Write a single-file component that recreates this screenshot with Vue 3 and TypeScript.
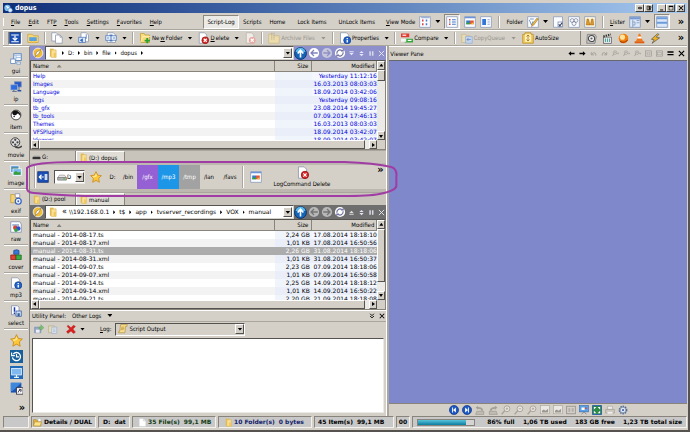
<script setup lang="ts">
import { h, ref } from 'vue'

const icons: Record<string, string> = {
  app: '<circle cx="6" cy="7" r="5.5" fill="#7cc0f4"/><path d="M3 3l5 2 3 5-4-1z" fill="#fff"/><circle cx="11" cy="11" r="4" fill="#dcecff" stroke="#2860b0"/>',
  dual: '<rect x="1" y="1" width="14" height="14" fill="#1c50b4" stroke="#0c2c78"/><path d="M3 4h10M8 5v5M5 8l3 3 3-3M3 13h10" stroke="#fff" stroke-width="1.6" fill="none"/>',
  dualSide: '<rect x="1" y="1" width="14" height="14" fill="#1c50b4" stroke="#0c2c78"/><path d="M3 8h6M6 5L3 8l3 3M11 4v8M13 4v8" stroke="#fff" stroke-width="1.5" fill="none"/>',
  tree: '<path d="M1 3h6l2 2h6v9H1z" fill="#f4d878" stroke="#c8a040"/><rect x="3" y="7" width="10" height="5" fill="#58a0e0"/><path d="M5 12h2v3H5zM9 12h2v3H9z" fill="#f0c040"/>',
  copy: '<path d="M1 1h6l3 3v8H1z" fill="#fff" stroke="#8a94a8"/><path d="M6 4h6l3 3v8H6z" fill="#fff" stroke="#8a94a8"/><path d="M12 4v3h3" fill="none" stroke="#8a94a8"/>',
  move: '<path d="M4 1h7l3 3v9H4z" fill="#fff" stroke="#8a94a8"/><rect x="1" y="7" width="9" height="7" fill="#dce8f8" stroke="#5078b8"/><path d="M3 11l3-2v4zM11 3v6" fill="#3468c0" stroke="#3468c0"/>',
  rename: '<path d="M3 1h8l3 3v10H3z" fill="#fff" stroke="#8a94a8"/><rect x="1" y="5" width="14" height="6" fill="#e4eefc" stroke="#5078b8"/><path d="M6 4h4M8 4v8M6 12h4M3 8h2M11 8h2" stroke="#2858a8" fill="none"/>',
  newFolder: '<path d="M2 2h5l1 2h6v10H2z" fill="#f6dc7c" stroke="#c49c38"/><path d="M2 14l3-8h10" fill="none" stroke="#fff2b8"/><path d="M11 8v7M7.500 11.500h7" stroke="#2ca030" stroke-width="2.500"/>',
  delete: '<path d="M3 1h7l3 3v11H3z" fill="#fff" stroke="#8a94a8"/><circle cx="11" cy="11" r="4.500" fill="#d82828" stroke="#901010"/><path d="M9 9l4 4M13 9l-4 4" stroke="#fff" stroke-width="1.500"/>',
  deleteOff: '<path d="M3 1h7l3 3v11H3z" fill="#f0ece8" stroke="#b8b0a8"/><circle cx="11" cy="11" r="4.500" fill="#e8a8a0"/><path d="M9 9l4 4M13 9l-4 4" stroke="#fff" stroke-width="1.500"/>',
  archive: '<path d="M1 3h5l2 2h7v10H1z" fill="#ecdcac" stroke="#c8b888"/><path d="M5 1v10M8 1v10" stroke="#b8ac90" stroke-width="1.500" stroke-dasharray="1.500 1"/>',
  info: '<path d="M2 1h8l3 3v11H2z" fill="#fff" stroke="#8a94a8"/><circle cx="11" cy="11" r="4.700" fill="#2464c8" stroke="#0c3c90"/><path d="M11 8v1.500M11 10.500v3.500" stroke="#fff" stroke-width="1.800"/>',
  compare: '<rect x="0" y="2" width="11" height="5" fill="#e03c30"/><rect x="2" y="3.500" width="5" height="1.500" fill="#fff"/><rect x="5" y="9" width="11" height="5" fill="#38a840"/><path d="M0 9h7v4H0z" fill="#f4f4f0"/><rect x="9" y="10.500" width="5" height="1.500" fill="#fff"/>',
  queue: '<path d="M1 3h5l1 2h5v9H1z" fill="#e8dcb4" stroke="#c8b888"/><path d="M6 6h9v9H6z" fill="#c4d4ec" stroke="#98b0d4"/><path d="M13 10H8M10 8l-2 2 2 2" stroke="#5c88c4" fill="none"/>',
  autosize: '<path d="M1 3h3V1h8v2h3v12H1z" fill="#f0cc60" stroke="#b88c28"/><rect x="4" y="3" width="8" height="10" fill="#fff0b8"/><path d="M8 4v8M6 6l2-2 2 2M6 10l2 2 2-2" stroke="#986c10" fill="none"/>',
  speaker: '<path d="M2 2h11l2 3-2 10H1z" fill="#c4c4c4" stroke="#707070"/><circle cx="8" cy="8" r="4.500" fill="#f0f0f0" stroke="#484848" stroke-width="1.500"/><circle cx="8" cy="8" r="1.600" fill="#606060"/>',
  clapper: '<rect x="2" y="6" width="12" height="9" fill="#e8e8e8" stroke="#555"/><path d="M2 5l11-3" stroke="#333" stroke-width="3" stroke-dasharray="2 1.500"/><path d="M5 8v5M8 8v5M11 8v5" stroke="#4ba6a0" stroke-width="1.500"/>',
  orange: '<circle cx="8" cy="8" r="7" fill="#f08010"/><circle cx="6.500" cy="6" r="3.700" fill="#ffe4a0"/><path d="M3 12q6 4 11-2" stroke="#b44000" fill="none" stroke-width="1.500"/>',
  cone: '<path d="M7 1h2l4 11H3z" fill="#f07818"/><path d="M5.500 5h5l1 3h-7z" fill="#fff"/><path d="M1 12h14v3H1z" fill="#e06010"/>',
  bolt: '<path d="M11 1L2 9l4 1-3 5 11-8-5-1 4-4z" fill="#f0b020" stroke="#555"/>',
  yellowCompass: '<circle cx="8" cy="8" r="6.500" fill="#f0bc38" stroke="#fff"/><path d="M12 3L9 9l-5 4 2-6z" fill="#fff" stroke="#786020" stroke-width=".7"/>',
  folder: '<path d="M3 1h6v13H3z" fill="#e8bc50"/><path d="M5 3h8v12H5z" fill="#fae094" stroke="#d0a844" stroke-width=".8"/><path d="M9 8h4v7H9z" fill="#f0c860"/>',
  up: '<circle cx="8" cy="8" r="7.300" fill="#1464b8" stroke="#0a2c60"/><path d="M2 6a6 5 0 0112 0z" fill="#58b8ec"/><path d="M8 13V5M4.500 8L8 4l3.500 4" stroke="#fff" stroke-width="2" fill="none"/>',
  back: '<circle cx="8" cy="8" r="6.800" fill="#fff"/><path d="M13 8H5M8 4L4 8l4 4" stroke="#8082bc" stroke-width="1.700" fill="none"/>',
  forward: '<circle cx="8" cy="8" r="6.800" fill="#c8c8dc"/><path d="M3 8h8M8 4l4 4-4 4" stroke="#8f90c4" stroke-width="1.700" fill="none"/>',
  backOff: '<circle cx="8" cy="8" r="6.800" fill="#b8b8b8"/><path d="M13 8H5M8 4L4 8l4 4" stroke="#747474" stroke-width="1.700" fill="none"/>',
  forwardOff: '<circle cx="8" cy="8" r="6.800" fill="#b8b8b8"/><path d="M3 8h8M8 4l4 4-4 4" stroke="#747474" stroke-width="1.700" fill="none"/>',
  refresh: '<circle cx="8" cy="8" r="6.800" fill="#fff"/><path d="M4 9a4 4 0 016.500-4M12 7a4 4 0 01-6.500 4" stroke="#70729c" stroke-width="1.700" fill="none"/><path d="M9 6h4V2zM7 10H3v4z" fill="#70729c"/>',
  eject: '<path d="M3 3h10v2H3zM3 7h10l-5 5z" fill="#e4e4f4"/>',
  ejectUp: '<path d="M3 11h10v2H3zM3 9h10L8 4z" fill="#dcdcdc"/>',
  split: '<path d="M3 7h10L8 2zM3 9h10l-5 5z" fill="#e4e4f4"/>',
  pause: '<path d="M3 3h3.500v10H3zM9 3h3.500v10H9z" fill="#d8d8e8"/>',
  closeLight: '<path d="M2 2l12 12M14 2L2 14" stroke="#eeeef8" stroke-width="2"/>',
  viewDots: '<rect x="1" y="1" width="14" height="14" fill="#fafcff" stroke="#8898b8"/><path d="M3 2h11" stroke="#9cb4dc" stroke-width="2"/><path d="M4 6h2M4 11h2" stroke="#d84040" stroke-width="2.500"/><path d="M9 6h2M9 11h2" stroke="#4878c8" stroke-width="2.500"/>',
  viewList: '<rect x="1" y="1" width="14" height="14" fill="#fafcff" stroke="#8898b8"/><path d="M4 5h2M4 11h2" stroke="#d84040" stroke-width="2"/><path d="M4 8h2M8 5h5M8 8h5M8 11h5" stroke="#4878c8" stroke-width="1.500"/>',
  viewThumb: '<rect x="1" y="1" width="14" height="14" fill="#fafcff" stroke="#8898b8"/><path d="M1 2h14" stroke="#6c94d8" stroke-width="2"/><rect x="3" y="6" width="5" height="5" fill="#3478c0"/><rect x="8" y="6" width="5" height="5" fill="#e05838"/><path d="M3 9h5v2H3z" fill="#38a040"/><path d="M10 9h3v2h-3z" fill="#f4c040"/>',
  viewTiles: '<rect x="1" y="1" width="14" height="14" fill="#fafcff" stroke="#8898b8"/><rect x="3" y="4" width="5" height="8" fill="#3474d8"/><path d="M10 5h3M10 8h3M10 11h3" stroke="#88a4d8" stroke-width="1.500"/>',
  folderEdit: '<rect x="1" y="1" width="14" height="14" fill="#fafcff" stroke="#8898b8"/><path d="M3 5l3 7 2-5M4 4h5" stroke="#5078b8" fill="none"/><path d="M13 3L7 11l-1 3 3-2 6-8z" fill="#f0c040" stroke="#906010" stroke-width=".7"/>',
  folderCheck: '<path d="M2 1h12v14H2z" fill="#fafcff" stroke="#8898b8"/><rect x="8" y="8" width="6" height="6" fill="#fff" stroke="#7088b0"/><path d="M9 11l1.500 2 3-4" stroke="#303860" fill="none" stroke-width="1.500"/>',
  folderMask: '<rect x="1" y="1" width="14" height="14" fill="#fafcff" stroke="#8898b8"/><circle cx="5.500" cy="6" r="2.500" fill="none" stroke="#788098"/><circle cx="10.500" cy="6" r="2.500" fill="none" stroke="#788098"/><circle cx="8" cy="10" r="2.700" fill="none" stroke="#788098"/>',
  binocular: '<rect x="1" y="1" width="14" height="14" fill="#fff8dc" stroke="#8898b8"/><path d="M4 4h2l2 8H3zM10 4h2l1 8H8.500z" fill="#e09820" stroke="#905808" stroke-width=".6"/>',
  lister: '<rect x="1" y="1" width="14" height="14" fill="#dce8f8" stroke="#7890b8"/><path d="M1 3h14" stroke="#7898d0" stroke-width="3"/><path d="M5 5v10M5 8h3v4H5M10 6h4M10 9h4" stroke="#7890b8" fill="none"/>',
  listerDual: '<rect x="1" y="1" width="14" height="14" fill="#dce8f8" stroke="#7890b8"/><path d="M1 3h14M1 9h14" stroke="#6c9cdc" stroke-width="2.500"/>',
  gui: '<rect x="5" y="1" width="10" height="9" fill="#f4f8ff" stroke="#5880b8" stroke-width="1.200"/><path d="M5 3h10M8 3v6M8 6h7" stroke="#90b0dc" fill="none"/><rect x="1" y="8" width="6" height="6" fill="#fff" stroke="#5880b8"/><path d="M9 12h5v3H9z" fill="#e8f0ff" stroke="#5880b8" stroke-width=".7"/>',
  ip: '<rect x="6" y="1" width="9" height="7" fill="#2458c8" stroke="#8090b0"/><rect x="1" y="5" width="9" height="7" fill="#2c6ce0" stroke="#a4b0c8"/><path d="M3 14h6M5 12v2M12 8v5" stroke="#6c7890" stroke-width="1.500"/><path d="M10 13h5" stroke="#2850a0" stroke-width="2"/>',
  yin: '<circle cx="8" cy="8" r="6.500" fill="#fff" stroke="#111"/><path d="M3 4a6.500 6.500 0 0110 8 3 3 0 00-5-4 3.500 3.500 0 01-5-4z" fill="#111"/><circle cx="10.500" cy="7" r="1" fill="#fff"/><circle cx="5.500" cy="10" r="1" fill="#111"/>',
  reel: '<circle cx="7" cy="7" r="6" fill="#ddd" stroke="#444" stroke-width="1.300"/><circle cx="7" cy="3.800" r="1.500" fill="#444"/><circle cx="4" cy="7" r="1.500" fill="#444"/><circle cx="10" cy="7" r="1.500" fill="#444"/><circle cx="7" cy="10.200" r="1.500" fill="#444"/><path d="M7 13q5 3 9-1" stroke="#444" stroke-width="2" fill="none"/>',
  image: '<rect x="1" y="1" width="11" height="9" fill="#5c98e0" stroke="#fff"/><rect x="4" y="5" width="11" height="9" fill="#78b8f0" stroke="#fff"/><path d="M5 13v-3l3-2 3 2 3-1v4z" fill="#38a038"/><path d="M2 4h9" stroke="#40803c"/>',
  exif: '<path d="M1 2h5l1 2h5v9H1z" fill="#f4d470" stroke="#c49c38"/><path d="M7 1h6v5H7z" fill="#fff" stroke="#88a"/><circle cx="11" cy="11" r="4" fill="#e8f0ff" stroke="#3460c0" stroke-width="1.600"/><circle cx="11" cy="11" r="1.200" fill="#3460c0"/>',
  raw: '<path d="M1 1h12l2 3v11H1z" fill="#fff" stroke="#7888a8"/><path d="M3 4h9v3H3z" fill="#a8b8d4"/><circle cx="7" cy="9" r="3" fill="#e04030"/><circle cx="11" cy="10" r="3" fill="#2850d0"/><circle cx="8" cy="12" r="2.500" fill="#30a040"/>',
  cover: '<path d="M5 2l4-1 3 1v5H5z" fill="#3878d8" stroke="#184890"/><path d="M1 8h7v6H1z" fill="#e04434" stroke="#901810"/><path d="M8 8h7v6H8z" fill="#3cac44" stroke="#186c20"/>',
  select: '<path d="M2 1h8l2 2v10H2z" fill="#fff" stroke="#7888a8"/><path d="M6 3v6M6 10v2" stroke="#1838b0" stroke-width="2"/><rect x="8" y="8" width="7" height="7" fill="#c8dcf8" stroke="#385c98"/><path d="M10 11h3v4h-3z" fill="#385c98"/>',
  star: '<path d="M8 .8l2.200 4.700 5 .7-3.700 3.600 1 5.200L8 12.500 3.500 15l1-5.200L.8 6.200l5-.7z" fill="#fcc838" stroke="#c88414"/><path d="M8 3l1.500 3.500L5 9l-2-2 3.500-.6z" fill="#ffe890"/>',
  history: '<rect width="16" height="16" fill="#18609c"/><path d="M4 5a5 5 0 11-1 4" stroke="#fff" stroke-width="1.600" fill="none"/><path d="M2 3v4h4M8 5v3.500h3" stroke="#fff" stroke-width="1.400" fill="none"/>',
  screen: '<rect width="16" height="16" fill="#2068b8"/><rect x="2" y="3" width="12" height="8" fill="#80b8f0" stroke="#e8f4ff"/><path d="M8 11v3M5 14h6" stroke="#e8f4ff" stroke-width="1.500"/>',
  shortcut: '<rect x="1" y="1" width="13" height="12" fill="#1c54b0"/><path d="M1 1h13L3 11H1z" fill="#3c88dc"/><rect x="8" y="7" width="8" height="8" fill="#fff" stroke="#334"/><path d="M10 13q0-3 3-3M11 9l3 .5-1 3" stroke="#224" fill="none"/>',
  drive: '<path d="M4 5h8l3 4H1z" fill="#e8e8e8" stroke="#888"/><path d="M1 9h14v4H1z" fill="#b8b8b8" stroke="#666"/><path d="M10 11h3" stroke="#38c038" stroke-width="1.500"/>',
  driveDark: '<path d="M1 7h14v4H1z" fill="#333"/><path d="M3 5h10l2 2H1z" fill="#999"/>',
  save: '<path d="M1 5h10v9H1z" fill="#98a8c8" stroke="#7888a8"/><path d="M3 9h6v5H3z" fill="#e8ecf4"/><path d="M8 5h3V1l5 5-5 4V8H8z" fill="#7cc070" stroke="#50984c" stroke-width=".6"/>',
  clipOff: '<path d="M1 3h9v11H1z" fill="#e4dcb8" stroke="#b0a888"/><path d="M6 5h8v10H6z" fill="#dce6f4" stroke="#98a8c4"/><path d="M8 8h4M8 10h4M8 12h4" stroke="#a4b4cc"/>',
  redX: '<path d="M3 2l5 4 4-4 3 2-4 4 4 5-3 2-4-4-5 4-2-3 5-4-4-4z" fill="#e02020" stroke="#a00c0c" stroke-width=".7"/>',
  scroll: '<path d="M4 1h11l-1 3h-2l-1 10H1l1-3h1z" fill="#f8e090" stroke="#b08830"/><path d="M5 5h5M5 7h5M4.500 9H9" stroke="#b08830"/>',
  folderOpen: '<path d="M1 3h5l2 2h6v9H1z" fill="#e4b440" stroke="#a87c20"/><path d="M3 7h12l-2 7H1z" fill="#fce48c" stroke="#b88c28"/><path d="M9 1h5v5H9z" fill="#fff" stroke="#999" stroke-width=".6"/>',
  page: '<path d="M2 1h8l4 4v10H2z" fill="#fff" stroke="#ccc"/><path d="M10 1v4h4" fill="none" stroke="#bbb"/>',
  arrowLeft: '<path d="M1 8l6-5v3.500h8v3H7V13z" fill="#000"/>',
  arrowRight: '<path d="M15 8L9 3v3.500H1v3h8V13z" fill="#000"/>',
  undo: '<path d="M3 5v6h6M4 10q3-6 8-3 2 2 1 6" stroke="#9a9690" stroke-width="1.800" fill="none"/>',
  redo: '<path d="M13 5v6H7M12 10Q9 4 4 7q-2 2-1 6" stroke="#9a9690" stroke-width="1.800" fill="none"/>',
  zoom: '<circle cx="7" cy="6" r="4" fill="#dedad4" stroke="#9a9690" stroke-width="1.500"/><path d="M4 9l-3 5M5 6h4" stroke="#9a9690" stroke-width="1.700"/><path d="M12 8h4M14 6v4" stroke="#9a9690"/>',
  actual: '<rect x="1" y="2" width="14" height="12" fill="none" stroke="#9a9690" stroke-width="1.500"/><path d="M5 5v6M11 5v6M8 6v1M8 9v1" stroke="#9a9690" stroke-width="1.500"/>',
  fit: '<rect x="1" y="2" width="14" height="12" fill="none" stroke="#9a9690" stroke-width="1.500"/><rect x="4" y="5" width="8" height="6" fill="none" stroke="#9a9690"/>',
  menu: '<path d="M1 3h14v3H1zM1 9h14v3H1z" fill="#000"/>',
  close: '<path d="M2 2l12 12M14 2L2 14" stroke="#000" stroke-width="2.700"/>',
  collapse: '<path d="M3 2l5 5 5-5M3 8l5 5 5-5" stroke="#000" stroke-width="2.500" fill="none"/>',
  minimize: '<path d="M3 12h8v2.500H3z" fill="#000"/>',
  maximize: '<path d="M2 2h12v12H2zM3.500 5v7.500h9V5z" fill="#000" fill-rule="evenodd"/>',
  dot: '<path d="M2 8l5-4v8zM14 8L9 4v8z" fill="#000"/>',
  dock: '<path d="M3 3h6v10H3zM8 4h5v4H8zM8 9h4v4H8z" fill="none" stroke="#000" stroke-width="1.700"/>',
  prev: '<circle cx="8" cy="8" r="7.300" fill="#1c58c0" stroke="#0c2c80"/><path d="M11 4L6.500 8l4.500 4zM5 4h1.500v8H5z" fill="#fff"/>',
  next: '<circle cx="8" cy="8" r="7.300" fill="#1c58c0" stroke="#0c2c80"/><path d="M5 4l4.500 4L5 12zM9.500 4H11v8H9.500z" fill="#fff"/>',
  rotateL: '<path d="M1 4l4-3v2q8 0 8 6h-3q0-3-5-3v2z" fill="#a4a098"/><path d="M3 10h11v5H1z" fill="#c0bcb4" stroke="#98948c"/>',
  rotateR: '<path d="M15 4l-4-3v2Q3 3 3 9h3q0-3 5-3v2z" fill="#a4a098"/><path d="M2 10h11l2 5H2z" fill="#c0bcb4" stroke="#98948c"/>',
  magnify: '<circle cx="9.500" cy="6" r="4.700" fill="#e8e4e0" stroke="#a8a098" stroke-width="1.500"/><path d="M6 9l-5 6" stroke="#a8a098" stroke-width="2.300"/><path d="M7.500 6h4M9.500 4v4" stroke="#989088"/>',
  magnifyOut: '<circle cx="9.500" cy="6" r="4.700" fill="#e8e4e0" stroke="#a8a098" stroke-width="1.500"/><path d="M6 9l-5 6" stroke="#a8a098" stroke-width="2.300"/><path d="M7.500 6h4" stroke="#989088"/>',
  picture: '<rect x="1" y="1" width="14" height="13" fill="#eae8e4" stroke="#a8a49c"/><path d="M3 12v-3l3-2 3 2 4-3v6z" fill="#9c9890"/>',
  present: '<rect x="1" y="1" width="14" height="10" fill="#58a0e8" stroke="#3868b0"/><path d="M4 4h5v4H4z" fill="#fff"/><circle cx="11" cy="5" r="1.500" fill="#e04838"/><path d="M4 15l4-4 4 4" stroke="#888" stroke-width="1.500" fill="none"/>',
  expand: '<rect x="1" y="1" width="14" height="14" fill="#2c8c44" stroke="#225aa8" stroke-width="1.500"/><path d="M3 7V3h4zM13 7V3H9zM3 9v4h4zM13 9v4H9z" fill="#fff"/>',
  printer: '<path d="M4 2h8v5H4z" fill="#eee" stroke="#aaa49c"/><path d="M1 7h14v6H1z" fill="#ccc8c0" stroke="#a09c94"/><path d="M4 11h8v3H4z" fill="#eee"/>',
  gear: '<circle cx="8" cy="8" r="5.800" fill="#c4d0e4" stroke="#5c7090" stroke-width="2.500" stroke-dasharray="2.500 1.200"/><circle cx="8" cy="8" r="4.500" fill="#e4ecf8" stroke="#5c7090"/><circle cx="8" cy="8" r="1.800" fill="#4868a0"/>'
}

const Icon = (props: { name: string }) =>
  h('svg', { viewBox: '0 0 16 16', class: 'icon', 'aria-hidden': 'true', innerHTML: icons[props.name] })
Icon.props = ['name']

const menus = [['F', 'ile'], ['E', 'dit'], ['FT', 'P'], ['T', 'ools'], ['S', 'ettings'], ['F', 'avorites'], ['H', 'elp']]
const side: [string, string][] = [
  ['gui', 'gui'], ['ip', 'ip'], ['item', 'yin'], ['movie', 'reel'], ['image', 'image'],
  ['exif', 'exif'], ['raw', 'raw'], ['cover', 'cover'], ['mp3', 'info'], ['select', 'select']
]
const launchers = ['star', 'history', 'screen', 'shortcut']
const media = ['speaker', 'clapper', 'orange', 'cone', 'bolt']
const viewerTop = ['arrowLeft', 'arrowRight', 'undo', 'redo', 'zoom', 'zoom', 'zoom', 'actual', 'fit', 'menu', 'close']
const viewerBottom = ['prev', 'next', 'rotateL', 'rotateR', 'magnify', 'magnifyOut', 'magnify', 'picture', 'picture', 'actual', 'present', 'expand', 'printer', 'gear']

interface Entry { name: string; size: string; date: string; time: string }
interface Pane { id: string; crumbs: string[]; nav: string[]; small: string[]; rows: Entry[] }

const upper: Pane = {
  id: 'source',
  crumbs: ['D:', 'bin', 'file', 'dopus'],
  nav: ['up', 'back', 'forward', 'refresh'],
  small: ['eject', 'split', 'pause', 'closeLight'],
  rows: [
    { name: 'Help', size: '', date: 'Yesterday', time: '11:12:16' },
    { name: 'Images', size: '', date: '16.03.2013', time: '08:03:03' },
    { name: 'Language', size: '', date: '18.09.2014', time: '03:42:06' },
    { name: 'logs', size: '', date: 'Yesterday', time: '09:08:16' },
    { name: 'tb_gfx', size: '', date: '23.08.2014', time: '19:45:27' },
    { name: 'tb_tools', size: '', date: '07.09.2014', time: '17:46:13' },
    { name: 'Themes', size: '', date: '16.03.2013', time: '08:03:03' },
    { name: 'VFSPlugins', size: '', date: '18.09.2014', time: '03:42:07' },
    { name: 'Viewers', size: '', date: '18.09.2014', time: '03:42:07' }
  ]
}
const lower: Pane = {
  id: 'target',
  crumbs: ['\\\\192.168.0.1', 't$', 'app', 'tvserver_recordings', 'VOX', 'manual'],
  nav: ['up', 'backOff', 'forwardOff', 'refresh'],
  small: ['ejectUp', 'split', 'pause', 'closeLight'],
  rows: [
    { name: 'manual - 2014-08-17.ts', size: '2,24 GB', date: '17.08.2014', time: '18:18:10' },
    { name: 'manual - 2014-08-17.xml', size: '1,01 KB', date: '17.08.2014', time: '16:50:56' },
    { name: 'manual - 2014-08-31.ts', size: '2,26 GB', date: '31.08.2014', time: '18:18:06' },
    { name: 'manual - 2014-08-31.xml', size: '1,01 KB', date: '31.08.2014', time: '16:50:37' },
    { name: 'manual - 2014-09-07.ts', size: '2,23 GB', date: '07.09.2014', time: '18:18:06' },
    { name: 'manual - 2014-09-07.xml', size: '1,01 KB', date: '07.09.2014', time: '16:50:58' },
    { name: 'manual - 2014-09-14.ts', size: '2,25 GB', date: '14.09.2014', time: '18:18:12' },
    { name: 'manual - 2014-09-14.xml', size: '1,01 KB', date: '14.09.2014', time: '16:50:22' },
    { name: 'manual - 2014-09-21.ts', size: '2,20 GB', date: '21.09.2014', time: '18:18:08' }
  ]
}
const panes = [upper, lower]
const selected = ref('manual - 2014-08-31.ts')
const drive = ref('D')
const log = ref('Script Output')
const output = ref('')
</script>

<template>
  <div class="window">
    <header class="title">
      <Icon name="app" /><span>dopus</span>
      <div class="caption">
        <button v-for="n in ['dot', 'dock']" :key="n" :aria-label="n"><Icon :name="n" /></button>
        <i class="gap"></i>
        <button v-for="n in ['minimize', 'maximize', 'close']" :key="n" :aria-label="n"><Icon :name="n" /></button>
      </div>
    </header>

    <div class="bar menubar">
      <nav class="menus">
        <button v-for="(m, i) in menus" :key="i"><template v-if="i === 2">FT<u>P</u></template><template v-else><u>{{ m[0] }}</u>{{ m[1] }}</template></button>
      </nav>
      <div class="scripts">
        <button class="pressed text">Script-Log</button>
        <button>Scripts</button><button class="wide">Home</button>
        <button class="wide">Lock Items</button><button>UnLock Items</button>
      </div>
      <div class="views">
        <button><u>V</u>iew Mode</button>
        <button aria-label="Icons"><Icon name="viewDots" /></button><i class="tri"></i>
        <button class="pressed" aria-label="Details"><Icon name="viewList" /></button>
        <button aria-label="Thumbnails"><Icon name="viewThumb" /></button>
        <button aria-label="Tiles"><Icon name="viewTiles" /></button>
        <i class="sep"></i>
        <button>Folder</button>
        <button aria-label="Folder options"><Icon name="folderEdit" /></button><i class="tri"></i>
        <button aria-label="Check"><Icon name="folderCheck" /></button>
        <button aria-label="Filter"><Icon name="folderMask" /></button>
        <button aria-label="Find"><Icon name="binocular" /></button>
        <i class="sep"></i>
        <button><u>L</u>ister</button>
        <button aria-label="Lister layout"><Icon name="lister" /></button><i class="tri"></i>
        <button class="pressed" aria-label="Dual horizontal"><Icon name="listerDual" /></button>
      </div>
      <button class="more">»</button>
    </div>

    <div class="bar toolbar">
      <div class="tools">
        <button class="pressed" aria-label="Dual display"><Icon name="dual" /></button>
        <button aria-label="Folder tree"><Icon name="tree" /></button>
        <i class="sep"></i>
        <button aria-label="Copy"><Icon name="copy" /></button><i class="tri"></i>
        <button aria-label="Move"><Icon name="move" /></button><i class="tri"></i>
        <button aria-label="Rename"><Icon name="rename" /></button><i class="tri"></i>
        <i class="sep"></i>
        <button><Icon name="newFolder" />Ne<u>w</u> Folder</button><i class="tri"></i>
        <button><Icon name="delete" /><u>D</u>elete</button><i class="tri"></i>
        <button aria-label="Secure delete"><Icon name="deleteOff" /></button>
        <i class="sep"></i>
        <button class="off"><Icon name="archive" />Archive Files</button><i class="tri off"></i>
        <i class="sep"></i>
        <button><Icon name="info" />Properties</button><i class="tri"></i>
        <i class="sep"></i>
        <button><Icon name="compare" />Compare</button><i class="tri"></i>
        <i class="sep"></i>
        <button class="off"><Icon name="queue" />CopyQueue</button><i class="tri off"></i>
        <button><Icon name="autosize" />AutoSize</button>
      </div>
      <div class="media">
        <button v-for="n in media" :key="n" :aria-label="n"><Icon :name="n" /></button>
      </div>
      <button class="more">»</button>
    </div>

    <div class="body">
      <aside class="side">
        <button v-for="s in side" :key="s[0]" class="sidebtn"><Icon :name="s[1]" /><span>{{ s[0] }}</span></button>
        <div class="launch"><button v-for="l in launchers" :key="l" :aria-label="l"><Icon :name="l" /></button></div>
        <button class="more">»</button>
      </aside>

      <main class="lister">
        <template v-for="(p, pi) in panes" :key="p.id">
          <div v-if="pi === 1" class="scriptbar">
            <i class="sep"></i>
            <button class="toggle" aria-label="Dual toggle"><Icon name="dualSide" /></button>
            <div class="drivebox">
              <Icon name="drive" />
              <select v-model="drive" aria-label="Drive"><option>D</option><option>G</option></select>
              <i class="drop"></i>
            </div>
            <button class="fav" aria-label="Favorites"><Icon name="star" /></button>
            <button class="path root-drive">D:</button><button class="path">/bin</button>
            <button class="path gfx">/gfx</button><button class="path mp3">/mp3</button><button class="path tmp">/tmp</button>
            <button class="path">/lan</button><button class="path favs">/favs</button>
            <i class="sep"></i>
            <button class="thumb" aria-label="Thumbnails"><Icon name="viewThumb" /></button>
            <button class="logdel"><Icon name="delete" /><span>LogCommand Delete</span></button>
            <button class="more">»</button>
            <svg class="ring" viewBox="0 0 374 38" preserveAspectRatio="none" aria-hidden="true">
              <path d="M2 8Q8 2 50 2L320 2Q350 3 367 7Q373 9 372 17L372 26Q371 31 355 34Q345 36 318 36L60 36Q30 35 9 33Q1 33 2 26Z" />
            </svg>
          </div>
          <div v-if="pi === 1" class="tabs">
            <button><Icon name="folder" />(D:) pool</button><button class="on"><Icon name="folder" />manual</button>
          </div>

          <div class="pathbar" :class="p.id">
            <button class="compass" aria-label="Folder menu"><Icon name="yellowCompass" /></button>
            <nav class="crumbs">
              <Icon name="folder" />
              <span v-if="pi === 1" class="root">«</span>
              <template v-for="(c, ci) in p.crumbs" :key="c">
                <i v-if="pi === 0 || ci > 0" class="crumbarrow"></i><button>{{ c }}</button>
              </template>
              <i v-if="pi === 0" class="crumbarrow"></i>
              <button class="drop" aria-label="Path history"></button>
            </nav>
            <div class="navs">
              <button v-for="n in p.nav" :key="n" class="round" :aria-label="n"><Icon :name="n" /></button>
              <button v-for="n in p.small" :key="n" class="small" :aria-label="n"><Icon :name="n" /></button>
            </div>
          </div>
          <div class="list" :class="p.id">
            <div class="rows">
              <table>
                <thead><tr><th>Name <i class="asc"></i></th><th class="size">Size</th><th class="mod">Modified</th></tr></thead>
                <tbody>
                  <tr v-for="r in p.rows" :key="r.name" :class="{ sel: r.name === selected }" @click="selected = r.name">
                    <td>{{ r.name }}</td><td class="size">{{ r.size }}</td>
                    <td class="mod"><div><span>{{ r.date }}</span><span>{{ r.time }}</span></div></td>
                  </tr>
                </tbody>
              </table>
            </div>
            <div class="vscroll"><button class="arr upw" aria-label="Scroll up"></button><i class="track"></i><i class="thumbv"></i><button class="arr downw" aria-label="Scroll down"></button></div>
            <div class="hscroll"><button class="arr leftw" aria-label="Scroll left"></button><i class="thumbh"></i><i class="trackh"></i><button class="arr rightw" aria-label="Scroll right"></button></div>
            <i class="corner"></i>
          </div>
          <div v-if="pi === 0" class="tabs">
            <button><Icon name="driveDark" />G:</button><button class="on"><Icon name="folder" />(D:) dopus</button>
          </div>
        </template>

        <div class="uhead">
          <span>Utility Panel:</span><button>Other Logs</button><i class="tri"></i>
          <div class="right"><button aria-label="Collapse"><Icon name="collapse" /></button><button aria-label="Close panel"><Icon name="close" /></button></div>
        </div>
        <div class="utools">
          <button aria-label="Save log"><Icon name="save" /></button>
          <button aria-label="Copy log"><Icon name="clipOff" /></button>
          <button class="clear" aria-label="Clear log"><Icon name="redX" /></button><i class="tri"></i>
          <label for="log"><u>L</u>og:</label>
          <div class="logbox">
            <Icon name="scroll" />
            <select id="log" v-model="log"><option>Script Output</option><option>Other Logs</option></select>
            <i class="drop"></i>
          </div>
        </div>
        <textarea v-model="output" class="output" aria-label="Log output"></textarea>
      </main>

      <section class="viewer">
        <div class="vhead">
          <span>Viewer Pane</span>
          <button v-for="(n, i) in viewerTop" :key="i" :aria-label="n"><Icon :name="n" /></button>
        </div>
        <div class="canvas"></div>
        <div class="vtools"><button v-for="(n, i) in viewerBottom" :key="i" :aria-label="n"><Icon :name="n" /></button></div>
      </section>
    </div>

    <footer class="status">
      <div class="cell s0"></div>
      <div class="cell s1"><Icon name="folderOpen" />Details / DUAL</div>
      <div class="cell s2"><span>D:</span><span>dat</span></div>
      <div class="cell s3"><Icon name="page" /><span>35 File(s)</span><span>99,1 MB</span></div>
      <div class="cell s4"><Icon name="folder" /><span>10 Folder(s)</span><span>0 bytes</span></div>
      <div class="cell s5"><span>45 Item(s)</span><span>99,1 MB</span></div>
      <div class="cell s6">00</div>
      <div class="cell s7">
        <div class="meter"><i></i></div>
        <span>86% full</span><span>1,06 TB used</span><span>183 GB free</span><span>1,23 TB total size</span>
      </div>
    </footer>
  </div>
</template>

<style>
body { margin: 0; overflow: hidden; }
</style>

<style scoped>
* { box-sizing: border-box; }
.window {
  display: flex; flex-direction: column; height: 100vh; padding: 3px 1px 2px 3px;
  background: #d4d0c8; color: #000; border-right: 2px solid #555250; border-bottom: 2px solid #555250;
  font: 6px/8px "DejaVu Sans Condensed", "Liberation Sans", sans-serif; overflow: hidden; cursor: default;
}
button, select, textarea, input { font: inherit; color: inherit; background: none; border: 0; padding: 0; margin: 0; border-radius: 0; }
button { display: flex; align-items: center; justify-content: center; white-space: nowrap; flex: none; }
u { text-underline-offset: 1px; text-decoration-thickness: 1px; }
.icon { width: 12px; height: 12px; flex: none; display: block; }
.tri { flex: none; width: 5px; height: 3px; background: #000; clip-path: polygon(0 0, 100% 0, 50% 100%); }
.tri.off { background: #98948c; }
.sep { flex: none; width: 2px; height: 12px; border-left: 1px solid #aaa69e; border-right: 1px solid #fff; }
.more { font-size: 11px; line-height: 8px; font-weight: bold; width: 12px; margin-left: auto; }
.off { color: #98948c; }

.title { display: flex; align-items: center; gap: 2px; height: 10px; flex: none; padding: 0 2px 0 1px; color: #fff; font-weight: bold; font-size: 7px; background: linear-gradient(90deg, #0f2f76, #3d62a4 35%, #a6caf0); }
.title .icon { width: 9px; height: 9px; }
.caption { display: flex; margin-left: auto; }
.caption .gap { width: 4px; }
.caption button { width: 9px; height: 8px; background: #d4d0c8; border: 1px solid; border-color: #fff #404040 #404040 #fff; }
.caption button:last-child { margin-left: 1px; }
.caption .icon { width: 6px; height: 6px; }

.bar { display: flex; align-items: center; flex: none; }
.menubar { height: 17px; padding-top: 1px; border-bottom: 1px solid #aaa69e; }
.menus { display: flex; gap: 8px; padding-left: 7px; width: 200px; flex: none; border-left: 1px solid #fff; }
.scripts { display: flex; align-items: center; gap: 8px; width: 183px; flex: none; }
.scripts .wide { margin-right: 4px; }
.pressed { border: 1px solid; border-color: #8c8880 #fff #fff #8c8880; background: #eceae6; width: 16px; height: 15px; }
.pressed.text { width: 36px; height: 14px; margin-right: -4px; }
.views { display: flex; align-items: center; gap: 4px; }
.views .sep { margin: 0 2px; }

.toolbar { height: 16px; border-top: 1px solid #fff; border-bottom: 1px solid #aaa69e; }
.tools { display: flex; align-items: center; gap: 5px; padding-left: 4px; width: 578px; flex: none; height: 14px; border-left: 1px solid #fff; border-right: 1px solid #88847c; }
.tools button { gap: 1px; }
.tools .off, .tools .off + .tri { margin-right: 1px; }
.tools .pressed { height: 13px; width: 14px; }
.media { display: flex; gap: 5px; padding-left: 5px; }
.media .icon { width: 11px; height: 11px; }

.body { display: flex; flex: 1; min-height: 0; }
.side { display: flex; flex-direction: column; width: 27px; flex: none; padding: 2px 1px 0; border-right: 1px solid #88847c; border-top: 1px solid #fff; }
.sidebtn { flex-direction: column; gap: 2px; height: 28px; padding-top: 2px; border-bottom: 1px solid #aaa69e; box-shadow: 0 1px 0 #fff; }
.launch { padding-top: 3px; }
.launch button { width: 100%; height: 16px; }
.launch .icon { width: 13px; height: 13px; }
.side .more { margin-top: 8px; }

.lister { display: flex; flex-direction: column; flex: 358 1 0; min-width: 0; border-right: 1px solid #fff; }
.pathbar { display: flex; height: 14px; flex: none; background: #8e90cc; }
.pathbar.target { background: #6e6e6e; font-family: "DejaVu Sans", sans-serif; }
.compass { width: 15px; }
.crumbs { display: flex; align-items: center; gap: 4px; flex: 1; min-width: 0; padding: 1px 1px 1px 2px; background: #fff; border: 1px solid; border-color: #55534f #d4d0c8 #d4d0c8 #55534f; }
.crumbs .icon { width: 10px; height: 10px; }
.root { font-size: 8px; margin-right: -2px; }
.crumbarrow { width: 2px; height: 4px; background: #000; clip-path: polygon(0 0, 100% 50%, 0 100%); }
.drop { width: 9px; height: 10px; flex: none; background: #d4d0c8; border: 1px solid; border-color: #fff #55534f #55534f #fff; display: flex; align-items: center; justify-content: center; }
.drop::after { content: ""; width: 5px; height: 3px; background: #000; clip-path: polygon(0 0, 100% 0, 50% 100%); }
.crumbs .drop { margin-left: auto; }
.navs { display: flex; align-items: center; flex: none; width: 92px; }
.round { width: 13px; }
.round:first-child .icon { width: 13px; height: 13px; }
.small { width: 10px; }
.small .icon { width: 7px; height: 7px; }

.list { display: grid; grid-template: 1fr 9px / 1fr 8px; flex: 1 1 91px; min-height: 0; border: 1px solid; border-color: #55534f #88847c #88847c #55534f; }
.rows { overflow: hidden; background: #fff; min-width: 0; min-height: 0; }
table { border-collapse: collapse; table-layout: fixed; width: 100%; }
th { height: 10px; padding: 0 2px; font-weight: normal; text-align: left; background: #d4d0c8; border-bottom: 1px solid #88847c; border-right: 1px solid #88847c; line-height: 8px; }
th.size, th.mod { text-align: right; }
.asc { display: inline-block; width: 5px; height: 3px; margin-left: 6px; background: #88847c; clip-path: polygon(50% 0, 100% 100%, 0 100%); vertical-align: middle; }
td { height: 8px; padding: 0 2px; line-height: 8px; white-space: nowrap; overflow: hidden; }
.target td, td.mod { font-family: "DejaVu Sans", sans-serif; }
.size { width: 37px; text-align: right; padding-right: 3px; }
.target td.size { padding-right: 2px; }
.mod { width: 65px; }
td.size { background: #f0f4fb; }
td.mod { background: #f4f7fe; padding: 0 0 0 1px; }
td.mod div { display: flex; gap: 2px; width: 66px; }
td.mod span:first-child { width: 35px; flex: none; text-align: right; }
tbody tr:nth-child(even) td { background: #f3f3f3; }
tbody tr:nth-child(even) td.size, tbody tr:nth-child(even) td.mod { background: #e9eef8; }
tbody tr.sel td, tbody tr.sel td.size, tbody tr.sel td.mod { background: #acacac; color: #fff; }
.source tbody { color: #0000dc; }
.vscroll { display: flex; flex-direction: column; background: #eceae6; }
.hscroll { display: flex; background: #eceae6; }
.arr { width: 8px; height: 9px; background: #d4d0c8; border: 1px solid; border-color: #fff #55534f #55534f #fff; }
.arr::after { content: ""; width: 4px; height: 4px; background: #000; clip-path: polygon(50% 0, 100% 75%, 0 75%); }
.downw::after { transform: rotate(180deg); }
.leftw::after { transform: rotate(-90deg); }
.rightw::after { transform: rotate(90deg); }
.thumbv, .thumbh { background: #d4d0c8; border: 1px solid; border-color: #fff #55534f #55534f #fff; }
.source .thumbv { height: 11px; order: 1; }
.source .track { order: 2; flex: 1; }
.source .downw { order: 3; }
.target .thumbv { flex: 1; order: 1; }
.target .track { height: 9px; order: 2; }
.target .downw { order: 3; }
.thumbh { flex: 1; }
.trackh { width: 4px; }
.corner { background: #d4d0c8; }

.tabs { display: flex; height: 13px; flex: none; background: #c8c4bc; border-top: 1px solid #aaa69e; }
.tabs button { min-width: 46px; padding: 0 3px 0 2px; gap: 1px; justify-content: flex-start; border-right: 1px solid #88847c; background: #ccc8c0; }
.tabs .on { min-width: 49px; background: #e0ddd6; border-left: 1px solid #fff; border-top: 1px solid #fff; }
.tabs .icon { width: 9px; height: 9px; }

.scriptbar { position: relative; display: flex; align-items: center; flex: none; height: 29px; padding: 0 0 0 4px; border-top: 2px solid #bcb8b0; border-bottom: 3px solid #bcb8b0; }
.scriptbar > .sep { height: 22px; }
.scriptbar > button { height: 24px; }
.toggle { width: 14px; }
.drivebox { display: flex; align-items: center; width: 31px; height: 14px; margin-left: 4px; padding-left: 2px; background: #fff; border: 1px solid; border-color: #55534f #eceae6 #eceae6 #55534f; }
.drivebox .icon { width: 10px; height: 10px; }
select { appearance: none; flex: 1; min-width: 0; }
.fav { width: 21px; }
.path { min-width: 18px; }
.path.root-drive { min-width: 13px; }
.path.gfx, .path.tmp, .path.mp3 { min-width: 21px; color: #fff; }
.gfx { background: #9560d4; }
.path.mp3 { background: #1e96e8; }
.tmp { background: #a2a2a2; color: #e8e8e8; }
.path.favs { min-width: 24px; }
.thumb { width: 24px; }
.logdel { flex-direction: column; gap: 1px; width: 68px; }
.logdel .icon { width: 13px; height: 13px; }
.scriptbar > .more { align-self: flex-start; height: 10px; }
.ring { position: absolute; left: -5px; top: -5px; width: calc(100% + 17px); height: 38px; z-index: 2; pointer-events: none; }
.ring path { fill: none; stroke: #a03ca4; stroke-width: 2; vector-effect: non-scaling-stroke; }

.uhead { display: flex; align-items: center; height: 12px; flex: none; padding: 0 1px 0 2px; gap: 6px; border-top: 1px solid #fff; border-bottom: 1px solid #aaa69e; }
.right { display: flex; margin-left: auto; gap: 4px; }
.right .icon { width: 6px; height: 6px; }
.utools { display: flex; align-items: center; height: 15px; flex: none; padding-left: 4px; gap: 4px; }
.utools .icon { width: 10px; height: 10px; }
.utools .clear { margin-left: 4px; }
.utools label { margin-left: 11px; }
.logbox { display: flex; align-items: center; width: 130px; height: 13px; padding-left: 2px; gap: 1px; background: #d4d0c8; border: 1px solid; border-color: #55534f #fff #fff #55534f; }
.output { flex: 1 1 76px; min-height: 0; margin: 1px 2px 3px; background: #fff; border: 1px solid; border-color: #55534f #eceae6 #eceae6 #55534f; resize: none; outline: 0; }

.viewer { display: flex; flex-direction: column; flex: 299 1 0; min-width: 0; border-left: 2px solid #aaa69e; }
.vhead { display: flex; align-items: center; height: 14px; flex: none; border-top: 1px solid #fff; }
.vhead span { margin-right: auto; padding-left: 1px; }
.vhead button { width: 11px; }
.vhead .icon { width: 7px; height: 7px; }
.canvas { flex: 1; background: #8088cc; border-top: 1px solid #66686c; }
.vtools { display: flex; justify-content: center; height: 13px; flex: none; border-top: 1px solid #88847c; }
.vtools button { width: 13px; }
.vtools .icon { width: 10px; height: 10px; }

.status { display: flex; gap: 2px; height: 12px; flex: none; font-weight: bold; font-family: "DejaVu Sans", sans-serif; }
.cell { display: flex; align-items: center; gap: 4px; flex: none; white-space: nowrap; background: #c8c8c8; border: 1px solid; border-color: #88847c #f4f2ee #f4f2ee #88847c; }
.cell .icon { width: 9px; height: 9px; }
.s0 { width: 26px; }
.s1 { width: 65px; padding-left: 1px; gap: 2px; }
.s2 { width: 32px; padding-left: 4px; }
.s3 { width: 84px; padding-left: 5px; color: #143c14; }
.s3 .icon, .s4 .icon { margin-right: -3px; }
.s4 { width: 94px; padding-left: 5px; color: #14246c; }
.s5 { width: 80px; padding-left: 3px; }
.s6 { width: 14px; justify-content: center; }
.s7 { flex: 1; justify-content: space-between; padding: 0 4px; gap: 8px; }
.meter { width: 58px; height: 7px; margin-right: 4px; border: 1px solid #88847c; background: #d4d4d4; }
.meter i { display: block; width: 86%; height: 100%; background: linear-gradient(#58c4dc, #0c7ca0); }
</style>
